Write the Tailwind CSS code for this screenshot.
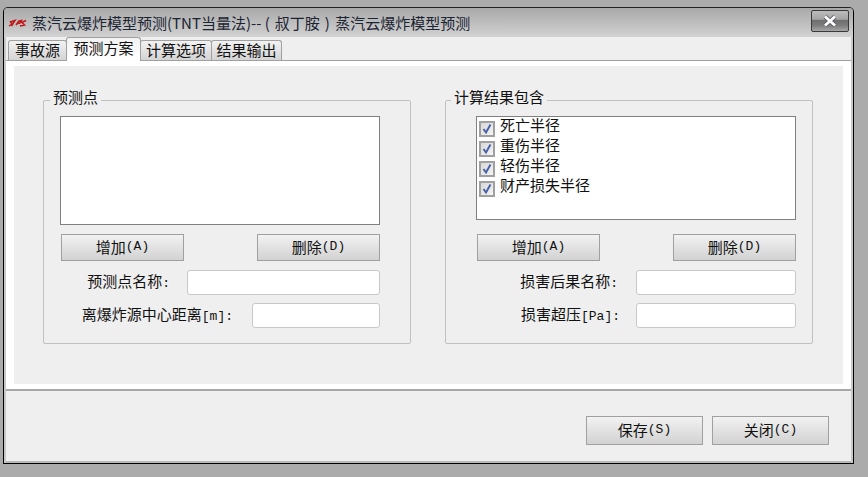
<!DOCTYPE html>
<html>
<head>
<meta charset="utf-8">
<script src="https://cdn.jsdelivr.net/npm/@tailwindcss/browser@4"></script>
</head>
<body class="bg-[#ababab] m-0 overflow-hidden font-['Noto_Sans_CJK_SC','Liberation_Sans',sans-serif] text-[15px] leading-[20px] text-[#111]">
<div class="w-[868px] h-[477px] pt-[7px] pl-[3px]">
  <div class="w-[851px] h-[457px] border border-black rounded-tl-[5px] rounded-tr-[5px] border-t-[#222] flex flex-col bg-[#efefef] shadow-[inset_2px_0_0_#c8c8c8,inset_-2px_0_0_#c8c8c8,inset_0_-2px_0_#b8b8b8]">
    <div class="h-[29px] shrink-0 flex items-center rounded-t-[4px] bg-gradient-to-b from-[#a9a9a9] to-[#d2d2d2] pl-[4px] pr-[4px]">
      <svg class="w-[19px] h-[10px] shrink-0" viewBox="0 0 19 10"><path d="M1 8 4 6 2.5 4 7 2.5 5 5.5 3.5 8M8 7 11 3 13.5 2.5 12 5 9.5 5.5M12 8 16.5 7 14 4.5 18 2.5" fill="none" stroke="#c01818" stroke-width="1.5"/></svg>
      <span class="ml-[5px] text-[15px] text-[#1b2433] whitespace-nowrap">蒸汽云爆炸模型预测(TNT当量法)-- <span>(</span><span class="mx-[5px]">叔丁胺</span>)<span class="ml-[2px]"> 蒸汽云爆炸模型预测</span></span>
      <div class="ml-auto w-[38px] h-[22px] mb-[4px] rounded-[2px] border border-[#3a3a3a] flex items-center justify-center bg-[linear-gradient(to_bottom,#bcbcbc_0%,#a4a4a4_42%,#6e6e6e_45%,#7c7c7c_72%,#a6a6a6_100%)]">
        <svg class="w-[14px] h-[12px]" viewBox="0 0 14 12"><path d="M2 1.5 12 10.5M12 1.5 2 10.5" stroke="#5a5a6a" stroke-width="4.4"/><path d="M2 1.5 12 10.5M12 1.5 2 10.5" stroke="#fff" stroke-width="2.8"/></svg>
      </div>
    </div>
    <div class="flex-1 flex flex-col px-[2px] pb-[2px] min-h-0">
      <div class="h-[23px] shrink-0 flex items-end pl-[2px] relative z-10">
        <div class="h-[20px] w-[59px] text-center border border-[#a0a0a0] border-b-0 rounded-t-[3px] bg-gradient-to-b from-[#f2f2f2] to-[#d4d4d4] text-[15px] leading-[18px]">事故源</div>
        <div class="h-[24px] w-[75px] -ml-px text-center border border-[#a0a0a0] border-b-0 rounded-t-[3px] bg-gradient-to-b from-[#f2f2f2] to-white text-[15px] leading-[19px] -mb-[1px]">预测方案</div>
        <div class="h-[20px] w-[72px] -ml-px text-center border border-[#a0a0a0] border-b-0 rounded-t-[3px] bg-gradient-to-b from-[#f2f2f2] to-[#d4d4d4] text-[15px] leading-[18px]">计算选项</div>
        <div class="h-[20px] w-[71px] -ml-px text-center border border-[#a0a0a0] border-b-0 rounded-t-[3px] bg-gradient-to-b from-[#f2f2f2] to-[#d4d4d4] text-[15px] leading-[18px]">结果输出</div>
      </div>
      <div class="h-[331px] shrink-0 border-t border-b-2 border-t-[#a0a0a0] border-b-[#a8a8a8] bg-white px-[8px] pt-[5px] pb-[6px]">
        <div class="h-[318px] bg-[#efefef] flex gap-[34px] pl-[29px] pt-[34px]">
          <div class="w-[368px] h-[244px] border border-[#c0c0c0] rounded-[2px] px-[16px]">
            <div class="w-fit -mt-[14px] -ml-[10px] bg-[#efefef] px-[3px] h-[20px] text-[15px]">预测点</div>
            <div class="mt-[9px] w-[320px] h-[109px] bg-white border border-[#808080]"></div>
            <div class="mt-[9px] ml-px w-[319px] flex justify-between">
              <div class="w-[123px] h-[27px] pb-[2px] border border-[#a0a0a0] bg-gradient-to-b from-[#f2f2f2] to-[#d2d2d2] flex items-center justify-center">增加<span class="font-['Liberation_Mono',monospace] text-[13px]">(A)</span></div>
              <div class="w-[123px] h-[27px] pb-[2px] border border-[#a0a0a0] bg-gradient-to-b from-[#f2f2f2] to-[#d2d2d2] flex items-center justify-center">删除<span class="font-['Liberation_Mono',monospace] text-[13px]">(D)</span></div>
            </div>
            <div class="mt-[9px] flex items-center justify-end h-[25px] w-[320px]">
              <span class="mr-[17px]">预测点名称<span class="font-['Liberation_Mono',monospace] text-[13px]">:</span></span>
              <div class="w-[193px] h-[25px] bg-white border border-[#c8c8c8] rounded-[3px]"></div>
            </div>
            <div class="mt-[8px] flex items-center justify-end h-[25px] w-[320px]">
              <span class="mr-[19px] whitespace-nowrap">离爆炸源中心距离<span class="font-['Liberation_Mono',monospace] text-[13px]">[m]:</span></span>
              <div class="w-[128px] h-[25px] bg-white border border-[#c8c8c8] rounded-[3px]"></div>
            </div>
          </div>
          <div class="w-[368px] h-[244px] border border-[#c0c0c0] rounded-[2px] pl-[30px]">
            <div class="w-fit -mt-[14px] -ml-[25px] bg-[#efefef] px-[3px] h-[20px] text-[15px]">计算结果包含</div>
            <div class="mt-[9px] w-[320px] h-[104px] bg-white border border-[#808080] pl-[2px]">
              <div class="h-[20px] flex"><span class="w-[16px] h-[16px] mt-[4px] border-2 border-[#a0a0a0] bg-gradient-to-br from-[#d8d8d8] to-[#f4f4f4] flex items-center justify-center shrink-0"><svg class="w-[12px] h-[12px]" viewBox="0 0 12 12"><path d="M2.5 6 5 9.5 9.5 1.5" fill="none" stroke="#4a62a8" stroke-width="2"/></svg></span><span class="ml-[5px] -mt-[2px]">死亡半径</span></div>
              <div class="h-[20px] flex"><span class="w-[16px] h-[16px] mt-[4px] border-2 border-[#a0a0a0] bg-gradient-to-br from-[#d8d8d8] to-[#f4f4f4] flex items-center justify-center shrink-0"><svg class="w-[12px] h-[12px]" viewBox="0 0 12 12"><path d="M2.5 6 5 9.5 9.5 1.5" fill="none" stroke="#4a62a8" stroke-width="2"/></svg></span><span class="ml-[5px] -mt-[2px]">重伤半径</span></div>
              <div class="h-[20px] flex"><span class="w-[16px] h-[16px] mt-[4px] border-2 border-[#a0a0a0] bg-gradient-to-br from-[#d8d8d8] to-[#f4f4f4] flex items-center justify-center shrink-0"><svg class="w-[12px] h-[12px]" viewBox="0 0 12 12"><path d="M2.5 6 5 9.5 9.5 1.5" fill="none" stroke="#4a62a8" stroke-width="2"/></svg></span><span class="ml-[5px] -mt-[2px]">轻伤半径</span></div>
              <div class="h-[20px] flex"><span class="w-[16px] h-[16px] mt-[4px] border-2 border-[#a0a0a0] bg-gradient-to-br from-[#d8d8d8] to-[#f4f4f4] flex items-center justify-center shrink-0"><svg class="w-[12px] h-[12px]" viewBox="0 0 12 12"><path d="M2.5 6 5 9.5 9.5 1.5" fill="none" stroke="#4a62a8" stroke-width="2"/></svg></span><span class="ml-[5px] -mt-[2px]">财产损失半径</span></div>
            </div>
            <div class="mt-[14px] ml-px w-[319px] flex justify-between">
              <div class="w-[123px] h-[27px] pb-[2px] border border-[#a0a0a0] bg-gradient-to-b from-[#f2f2f2] to-[#d2d2d2] flex items-center justify-center">增加<span class="font-['Liberation_Mono',monospace] text-[13px]">(A)</span></div>
              <div class="w-[123px] h-[27px] pb-[2px] border border-[#a0a0a0] bg-gradient-to-b from-[#f2f2f2] to-[#d2d2d2] flex items-center justify-center">删除<span class="font-['Liberation_Mono',monospace] text-[13px]">(D)</span></div>
            </div>
            <div class="mt-[9px] flex items-center justify-end h-[25px] w-[320px]">
              <span class="mr-[18px]">损害后果名称<span class="font-['Liberation_Mono',monospace] text-[13px]">:</span></span>
              <div class="w-[160px] h-[25px] bg-white border border-[#c8c8c8] rounded-[3px]"></div>
            </div>
            <div class="mt-[8px] flex items-center justify-end h-[25px] w-[320px]">
              <span class="mr-[16px] whitespace-nowrap">损害超压<span class="font-['Liberation_Mono',monospace] text-[13px]">[Pa]:</span></span>
              <div class="w-[160px] h-[25px] bg-white border border-[#c8c8c8] rounded-[3px]"></div>
            </div>
          </div>
        </div>
      </div>
      <div class="flex-1 flex justify-end items-start gap-[9px] pt-[25px] pr-[22px]">
        <div class="w-[117px] h-[29px] pb-[2px] border border-[#a0a0a0] bg-gradient-to-b from-[#f2f2f2] to-[#d2d2d2] flex items-center justify-center">保存<span class="font-['Liberation_Mono',monospace] text-[13px]">(S)</span></div>
        <div class="w-[117px] h-[29px] pb-[2px] border border-[#a0a0a0] bg-gradient-to-b from-[#f2f2f2] to-[#d2d2d2] flex items-center justify-center">关闭<span class="font-['Liberation_Mono',monospace] text-[13px]">(C)</span></div>
      </div>
    </div>
  </div>
</div>
</body>
</html>
